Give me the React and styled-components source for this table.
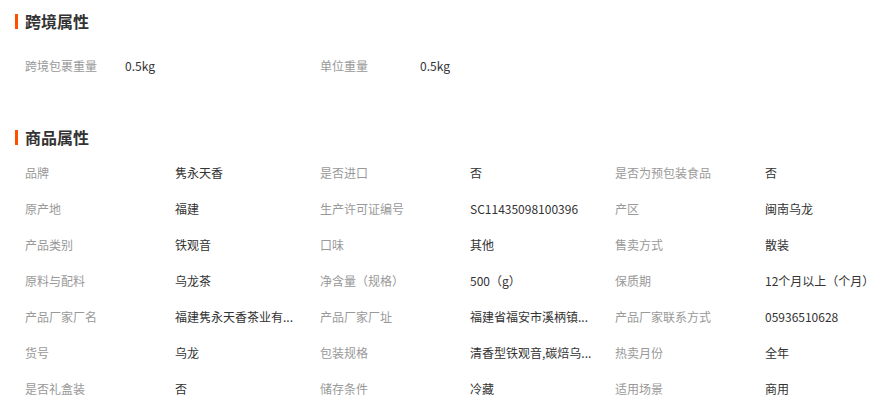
import React from 'react'
import styled, {createGlobalStyle} from 'styled-components'

const crossBorder = [
    ['跨境包裹重量', '0.5kg'],
    ['单位重量', '0.5kg'],
]

// long values are shown cut short, as on the product page
const attrs = [
    ['品牌', '隽永天香'],
    ['是否进口', '否'],
    ['是否为预包装食品', '否'],
    ['原产地', '福建'],
    ['生产许可证编号', 'SC11435098100396'],
    ['产区', '闽南乌龙'],
    ['产品类别', '铁观音'],
    ['口味', '其他'],
    ['售卖方式', '散装'],
    ['原料与配料', '乌龙茶'],
    ['净含量（规格）', '500（g）'],
    ['保质期', '12个月以上（个月）'],
    ['产品厂家厂名', '福建隽永天香茶业有...'],
    ['产品厂家厂址', '福建省福安市溪柄镇...'],
    ['产品厂家联系方式', '05936510628'],
    ['货号', '乌龙'],
    ['包装规格', '清香型铁观音,碳焙乌...'],
    ['热卖月份', '全年'],
    ['是否礼盒装', '否'],
    ['储存条件', '冷藏'],
    ['适用场景', '商用'],
]

const App = () => {
    return (
        <Page>
            <GlobalStyle/>
            <Section>
                <Title>跨境属性</Title>
                <Grid $top={16}>
                    {crossBorder.map(([k, v]) => (
                        <Item key={k}>
                            <Label $w={100}>{k}</Label>
                            <Value>{v}</Value>
                        </Item>
                    ))}
                </Grid>
            </Section>
            <Section $top={44}>
                <Title>商品属性</Title>
                <Grid $top={7}>
                    {attrs.map(([k, v]) => (
                        <Item key={k}>
                            <Label $w={150}>{k}</Label>
                            <Value>{v}</Value>
                        </Item>
                    ))}
                </Grid>
            </Section>
        </Page>
    )
}

const GlobalStyle = createGlobalStyle`
    body {
        margin: 0;
        background: #fff;
        font-family: "Noto Sans CJK SC", "Liberation Sans", sans-serif;
    }
`

const Page = styled.div`
    width: 892px;
    padding-top: 11px;
`

const Section = styled.section`
    margin-top: ${p => p.$top || 0}px;
`

const Title = styled.h3`
    margin: 0;
    padding-left: 25px;
    position: relative;
    height: 20px;
    line-height: 20px;
    font-size: 16px;
    font-weight: bold;
    color: #333;

    &::before {
        content: '';
        position: absolute;
        left: 15px;
        top: 3px;
        width: 3px;
        height: 15px;
        background: #ff5000;
    }
`

const Grid = styled.div`
    margin-top: ${p => p.$top}px;
    padding-left: 25px;
    display: grid;
    grid-template-columns: repeat(3, 295px);
`

const Item = styled.div`
    display: flex;
    align-items: center;
    height: 36px;
    font-size: 12px;
`

const Label = styled.span`
    width: ${p => p.$w}px;
    flex-shrink: 0;
    color: #999;
`

const Value = styled.span`
    color: #333;
    white-space: nowrap;
`

export default App
